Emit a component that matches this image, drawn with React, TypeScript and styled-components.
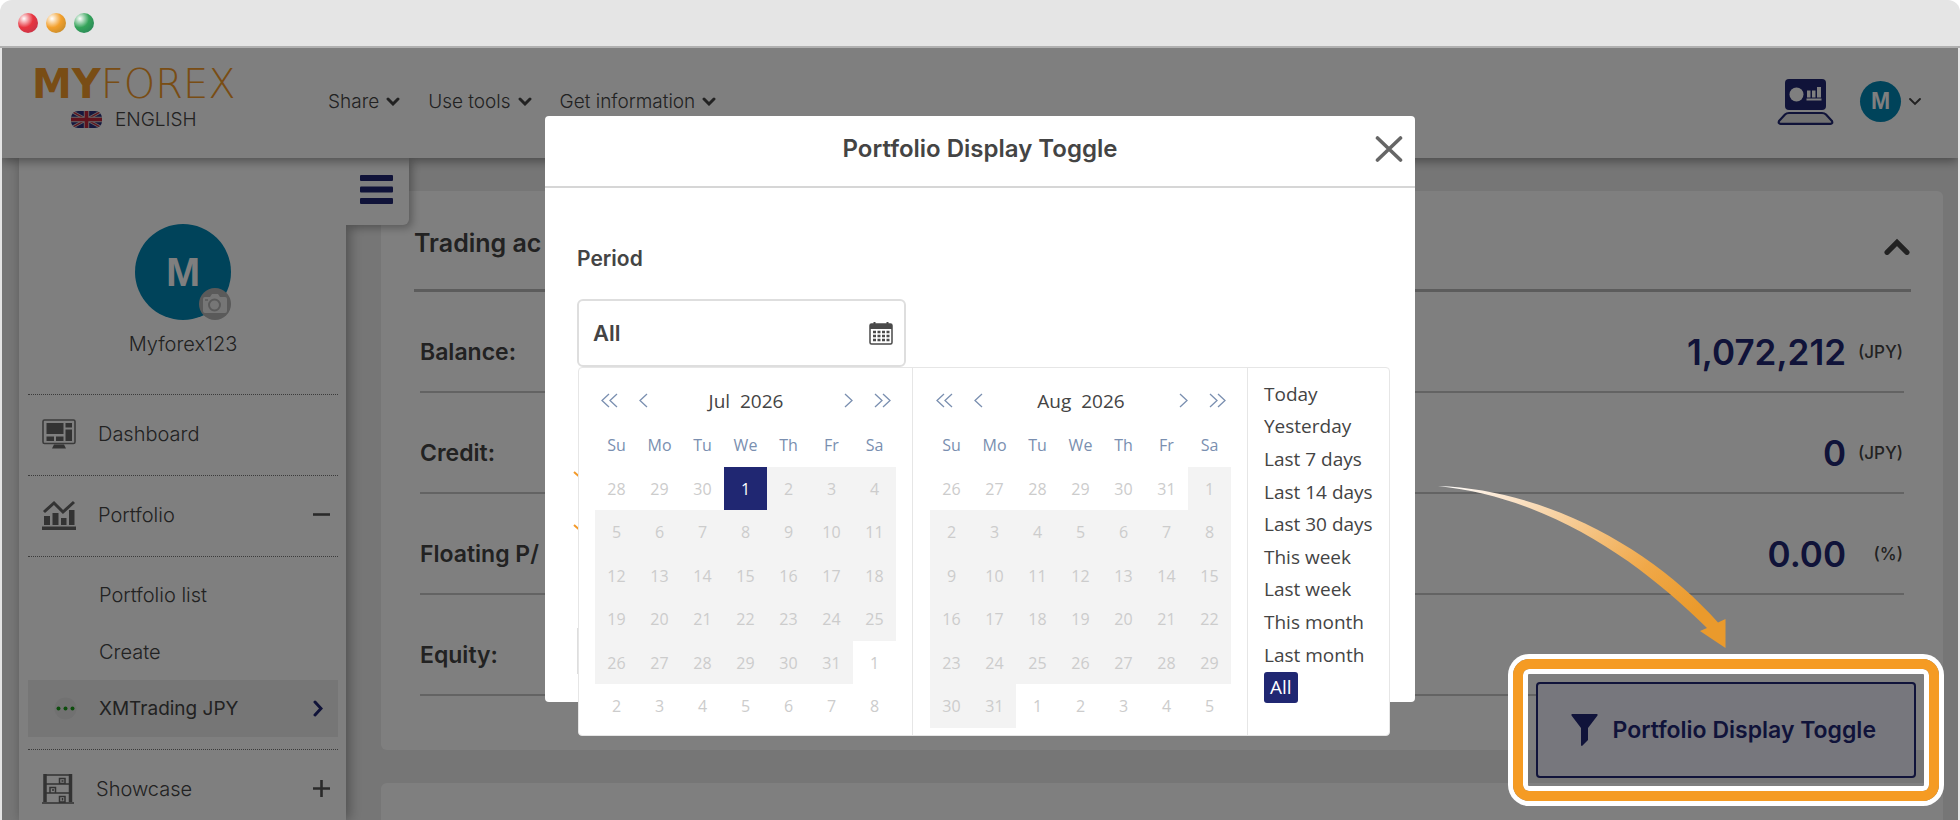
import React from "react";
import styled, { createGlobalStyle } from "styled-components";

const color = {
  navy: "#202772",
  teal: "#0086b4",
  orange: "#f59b23",
  gold: "#f39a2a",
  text: "#444444",
  line: "#c6c6c6",
  page: "#ededed",
  chrome: "#e5e5e5",
  muted: "#7a8fb0",
};

const uiFont = `Inter, "Liberation Sans", sans-serif`;
const calFont = `"Open Sans", "Noto Sans", sans-serif`;

const GlobalStyle = createGlobalStyle`
  *, *::before, *::after { box-sizing: border-box; }
  body { margin: 0; background: #ffffff; font-family: ${uiFont}; color: ${color.text}; }
  button, input { font: inherit; color: inherit; }
  button { background: none; border: 0; padding: 0; cursor: pointer; }
  a { color: inherit; text-decoration: none; }
  ul, dl, dd, h1, h2 { margin: 0; padding: 0; }
  ul { list-style: none; }
  svg { display: block; flex: none; }
`;

/* Window frame */
const Window = styled.div`
  display: flex;
  flex-direction: column;
  height: 100vh;
`;
const TitleBar = styled.div`
  display: flex;
  align-items: center;
  gap: 8px;
  flex: none;
  height: 48px;
  padding: 0 18px;
  background: ${color.chrome};
  border-bottom: 2px solid #b0b0b0;
  border-radius: 12px 12px 0 0;
`;
const Light = styled.span<{ $base: string; $deep: string }>`
  width: 20px;
  height: 20px;
  border-radius: 50%;
  background: radial-gradient(circle at 30% 28%, #ffffff 0, ${(p) => p.$base} 45%, ${(p) => p.$deep} 80%, ${(p) => p.$base} 100%);
`;
const Screen = styled.div`
  position: relative;
  display: flex;
  flex-direction: column;
  flex: 1;
  min-height: 0;
  overflow: hidden;
  background: ${color.page};
  border: solid ${color.chrome};
  border-width: 0 2px;
`;

/* Header */
const Header = styled.header`
  position: relative;
  z-index: 2;
  display: flex;
  align-items: center;
  flex: none;
  height: 110px;
  padding: 0 36px 3px 30px;
  background: #ffffff;
  box-shadow: 0 3px 10px rgba(0, 0, 0, 0.4);
`;
const Brand = styled.div`
  display: flex;
  flex-direction: column;
  width: 296px;
  padding-bottom: 10px;
`;
const Logo = styled.a`
  font: 200 40px/47px "DejaVu Sans", sans-serif;
  color: ${color.gold};
  b { font-weight: 700; }
`;
const Language = styled.button`
  display: flex;
  align-items: center;
  gap: 13px;
  padding: 0 0 0 39px;
  font-size: 19px;
  font-weight: 300;
  line-height: 24px;
`;
const Nav = styled.nav`
  display: flex;
  gap: 28px;
  flex: 1;
`;
const NavButton = styled.button`
  display: flex;
  align-items: center;
  gap: 7px;
  font-size: 19px;
  font-weight: 300;
  line-height: 26px;
`;
const Account = styled.div`
  display: flex;
  align-items: center;
  gap: 26px;
`;
const AccountButton = styled.button`
  display: flex;
  align-items: center;
  gap: 7px;
`;
const Avatar = styled.span<{ $size: number; $font: number }>`
  display: grid;
  place-items: center;
  width: ${(p) => p.$size}px;
  height: ${(p) => p.$size}px;
  border-radius: 50%;
  background: ${color.teal};
  color: #ffffff;
  font: 700 ${(p) => p.$font}px/1 "Liberation Sans", sans-serif;
`;

/* Main area */
const Body = styled.div`
  display: flex;
  gap: 35px;
  flex: 1;
  min-height: 0;
  padding: 0 15px 0 17px;
`;
const Sidebar = styled.aside`
  position: relative;
  z-index: 1;
  flex: none;
  width: 327px;
  padding: 66px 8px 0 9px;
  background: #ffffff;
  box-shadow: 3px 0 12px rgba(0, 0, 0, 0.35);
`;
const MenuTab = styled.button`
  position: absolute;
  top: 0;
  left: 100%;
  display: flex;
  justify-content: center;
  width: 63px;
  height: 67px;
  padding: 17px 2px 0 0;
  background: #ffffff;
  border-radius: 0 0 6px 0;
  box-shadow: 3px 3px 8px rgba(0, 0, 0, 0.3);
  clip-path: inset(0 -20px -20px 0);
`;
const Profile = styled.div`
  display: flex;
  flex-direction: column;
  align-items: center;
  gap: 11px;
  height: 170px;
  font-size: 20px;
  font-weight: 300;
  line-height: 26px;
`;
const Portrait = styled.div`
  position: relative;
`;
const CameraBadge = styled.button`
  position: absolute;
  right: 0;
  bottom: 0;
  display: grid;
  place-items: center;
  width: 32px;
  height: 32px;
  border-radius: 50%;
  background: #b4b4b4;
`;
const MenuRow = styled.button`
  display: flex;
  align-items: center;
  gap: 22px;
  width: 100%;
  height: 81px;
  padding: 0 8px 3px 14px;
  border-top: 1px dotted #777777;
  font-size: 20px;
  font-weight: 300;
  text-align: left;
  span { flex: 1; }
`;
const SubMenu = styled.ul`
  padding: 9px 0 12px;
  border-top: 1px dotted #777777;
`;
const SubLink = styled.a<{ $active?: boolean }>`
  display: flex;
  align-items: center;
  height: 57px;
  padding: 0 15px 0 ${(p) => (p.$active ? 26 : 71)}px;
  gap: 22px;
  background: ${(p) => (p.$active ? color.page : "transparent")};
  font-size: ${(p) => (p.$active ? 19 : 20)}px;
  font-weight: ${(p) => (p.$active ? 400 : 300)};
  span { flex: 1; }
`;

const Content = styled.main`
  display: flex;
  flex-direction: column;
  gap: 33px;
  flex: 1;
  min-width: 0;
  padding-top: 33px;
`;
const Card = styled.section`
  flex: none;
  min-height: 320px;
  padding: 0 32px 54px 33px;
  background: #ffffff;
  border-radius: 6px;
`;
const CardHead = styled.div`
  display: flex;
  align-items: center;
  justify-content: space-between;
  height: 101px;
  padding-top: 6px;
  border-bottom: 3px solid #b9b9b9;
  h2 { font-size: 25px; font-weight: 600; line-height: 32px; }
  button { padding-top: 7px; }
`;
const Figures = styled.dl`
  padding: 0 7px 0 6px;
`;
const Figure = styled.div`
  display: flex;
  align-items: center;
  justify-content: space-between;
  height: 101px;
  padding: 20px 1px 0 0;
  border-bottom: 2px solid ${color.line};
  dt { font-size: 23px; font-weight: 600; }
  dd { display: flex; align-items: center; }
`;
const Amount = styled.span`
  color: ${color.navy};
  font-size: 35px;
  font-weight: 600;
`;
const Unit = styled.span`
  width: 57px;
  font-size: 17px;
  font-weight: 500;
  text-align: right;
`;

/* Modal */
const Overlay = styled.div`
  position: absolute;
  inset: 0;
  z-index: 3;
  display: flex;
  justify-content: center;
  align-items: flex-start;
  padding-top: 68px;
  background: rgba(0, 0, 0, 0.5);
`;
const Modal = styled.div`
  width: 870px;
  max-width: 100%;
  background: #ffffff;
  border-radius: 4px;
`;
const ModalHead = styled.div`
  display: grid;
  grid-template-columns: 40px 1fr 40px;
  align-items: center;
  justify-items: center;
  height: 72px;
  padding: 0 6px 4px;
  border-bottom: 2px solid #d6d6d6;
  h1 { font-size: 24px; font-weight: 600; line-height: 32px; }
`;
const ModalBody = styled.div`
  display: flex;
  flex-direction: column;
  padding: 57px 32px 28px;
`;
const FieldLabel = styled.label`
  margin-bottom: 26px;
  font-size: 21px;
  font-weight: 600;
  line-height: 28px;
`;
const FieldWrap = styled.div`
  position: relative;
`;
const Field = styled.div`
  display: flex;
  align-items: center;
  width: 329px;
  height: 68px;
  padding: 0 11px 0 14px;
  border: 2px solid #dedede;
  border-radius: 6px;
  input {
    flex: 1;
    min-width: 0;
    padding: 0;
    border: 0;
    outline: 0;
    background: none;
    font-size: 22px;
    font-weight: 600;
  }
`;
const Options = styled.div`
  display: flex;
  flex-direction: column;
  gap: 29px;
  margin-left: -4px;
  padding: 104px 0 80px;
`;
const OptionBox = styled.div`
  width: 300px;
  height: 46px;
  border: 1px solid #dedede;
`;

/* Date range popup */
const Picker = styled.div`
  position: absolute;
  top: 100%;
  left: 1px;
  display: flex;
  width: 812px;
  background: #ffffff;
  border: 1px solid #e6e6e6;
  border-radius: 4px;
  font-family: ${calFont};
`;
const Month = styled.div`
  padding: 11px 16px 7px;
  border-right: 1px solid #e6e6e6;
  & + & { padding-left: 17px; }
`;
const MonthHead = styled.div`
  display: flex;
  align-items: center;
  justify-content: space-between;
  height: 43px;
  padding: 0 5px 0 6px;
  font-size: 19px;
  span { white-space: pre; }
`;
const Steps = styled.div`
  display: flex;
  gap: 21px;
`;
const Days = styled.table`
  border-collapse: collapse;
  font-size: 16px;
  th {
    width: 43px;
    height: 45px;
    padding: 0;
    color: ${color.muted};
    font-weight: 400;
  }
  tr:nth-child(even) td { height: 44px; }
`;
const Day = styled.td<{ $kind: "out" | "in" | "picked" }>`
  width: 43px;
  height: 43px;
  padding: 0;
  text-align: center;
  color: ${(p) => (p.$kind === "picked" ? "#ffffff" : "#cccccc")};
  background: ${(p) => (p.$kind === "picked" ? color.navy : p.$kind === "in" ? "#f3f3f3" : "transparent")};
`;
const DayButton = styled.button`
  width: 100%;
  height: 100%;
  line-height: 24px;
`;
const Presets = styled.ul`
  display: grid;
  grid-auto-rows: 1fr;
  height: 326px;
  margin-top: 10px;
  padding-left: 16px;
  li { display: flex; align-items: center; }
`;
const Preset = styled.button<{ $on?: boolean }>`
  padding: ${(p) => (p.$on ? "0 6px" : "0")};
  border-radius: 3px;
  background: ${(p) => (p.$on ? color.navy : "transparent")};
  color: ${(p) => (p.$on ? "#ffffff" : color.text)};
  font-size: 19px;
  line-height: 31px;
`;

/* Callout around the floating button */
const Pointer = styled.svg`
  position: absolute;
  z-index: 4;
  right: 232px;
  bottom: 172px;
`;
const Callout = styled.div`
  position: absolute;
  z-index: 4;
  right: 19px;
  bottom: 19px;
  padding: 13px;
  border: 10px solid ${color.orange};
  border-radius: 16px;
  box-shadow: 0 0 0 5px #ffffff, inset 0 0 0 5px #ffffff;
`;
const ToggleButton = styled.button`
  display: flex;
  align-items: center;
  gap: 15px;
  height: 96px;
  padding: 0 38px 0 33px;
  background: #77777d;
  border: 2px solid #10133a;
  border-radius: 4px;
  color: #10133a;
  font-size: 23px;
  font-weight: 600;
`;

/* Icons */
const Chevron = ({ w = 14, stroke = 3, up = false }: { w?: number; stroke?: number; up?: boolean }) => (
  <svg width={w} height={w * 0.64} viewBox="0 0 14 9" fill="none" stroke={color.text} strokeWidth={stroke} strokeLinecap="round">
    <path d={up ? "M2 7.2 7 2.2 12 7.2" : "M2 2 7 7 12 2"} />
  </svg>
);
const Step = ({ dir, double }: { dir: "prev" | "next"; double?: boolean }) => (
  <svg width={double ? 17 : 9} height={15} viewBox={double ? "0 0 17 15" : "0 0 9 15"} fill="none" stroke={color.muted} strokeWidth="1.3">
    <path d={dir === "prev" ? "M8 1 1 7.5 8 14" : "M1 1 8 7.5 1 14"} />
    {double && <path d={dir === "prev" ? "M16 1 9 7.5 16 14" : "M9 1 16 7.5 9 14"} />}
  </svg>
);
const Flag = () => (
  <svg width="31" height="18" viewBox="0 0 31 18">
    <clipPath id="flag"><rect width="31" height="17" rx="7" /></clipPath>
    <g clipPath="url(#flag)">
      <rect width="31" height="17" fill="#2a2f7c" />
      <path d="M0 0 31 17M31 0 0 17" stroke="#d0d0d0" strokeWidth="3" />
      <path d="M0 0 31 17M31 0 0 17" stroke="#c0263a" strokeWidth="1.4" />
      <path d="M15.500 0V17M0 8.500H31" stroke="#d0d0d0" strokeWidth="5.400" />
      <path d="M15.500 0V17M0 8.500H31" stroke="#c0263a" strokeWidth="3.600" />
    </g>
  </svg>
);
const Laptop = () => (
  <svg width="57" height="46" viewBox="0 0 57 46">
    <rect x="8" width="41" height="31" rx="4" fill={color.navy} />
    <circle cx="19.500" cy="15.500" r="7" fill="#fff" />
    <path d="M30 11.500h3.500v7h1.500v-7h3.500v7h1.500V8h4v10.500H30zM29.500 19.500h15v2h-15z" fill="#fff" />
    <path d="M12 34h33q2.500 0 4 1.500l6 6.500q1 2.800-1.500 2.800h-50q-2.500 0-1.500-2.800l6-6.500Q9.500 34 12 34z" fill="#e4e4e4" stroke={color.navy} strokeWidth="2.200" />
  </svg>
);
const Burger = () => (
  <svg width="33" height="29" viewBox="0 0 33 29" fill={color.navy}>
    <rect width="33" height="6" rx="1" /><rect y="11.500" width="33" height="6" rx="1" /><rect y="23" width="33" height="6" rx="1" />
  </svg>
);
const Camera = () => (
  <svg width="24" height="20" viewBox="0 0 24 20">
    <path d="M2 3h5l2-3h6l2 3h5q2 0 2 2v12q0 2-2 2H2q-2 0-2-2V5q0-2 2-2z" fill="#ececec" />
    <circle cx="11.500" cy="11" r="5.500" fill="none" stroke="#b4b4b4" strokeWidth="2" />
    <path d="M2 6h3" stroke="#b4b4b4" strokeWidth="1.500" />
  </svg>
);
const Monitor = () => (
  <svg width="34" height="30" viewBox="0 0 34 30" fill="#666">
    <rect x="1" y="1" width="32" height="23.500" rx="1.500" fill="none" stroke="#777" strokeWidth="1.600" />
    <path d="M4.500 4h17v11h-17zM23.500 4H30v4.500h-6.500zM23.500 10.500H30V22h-6.500zM4.500 17.500H12V22H4.500zM14 17.500h7.500V22H14zM12 25.500h10l2 4H10z" />
  </svg>
);
const ChartIcon = () => (
  <svg width="34" height="30" viewBox="0 0 34 30" fill="#666">
    <path d="M2 12 12 3l9 9L32 2" fill="none" stroke="#666" strokeWidth="3" />
    <path d="M2 16h6v9H2zM10.500 13h6v12h-6zM19 18h5.500v7H19zM27 10h5.500v15H27zM0 26.500h34v3.500H0z" />
  </svg>
);
const Shelf = () => (
  <svg width="32" height="30" viewBox="0 0 32 30" fill="none" stroke="#666" strokeWidth="1.500">
    <path d="M3 0v28M28.500 0v28" strokeWidth="3.500" />
    <path d="M0 29h32M3 1h25M3 10h25M3 19h25M17.500 4.500h5.500v5h-5.500zM8 13.500h5.500V19H8zM17.500 22.500h5.500V28h-5.500zM19.500 7h2M10 16h2M20.500 24v2.500" />
  </svg>
);
const Sign = ({ plus }: { plus?: boolean }) => (
  <svg width="17" height="17" viewBox="0 0 17 17" stroke="#555" strokeWidth="2.600"><path d={plus ? "M0 8.500h17M8.500 0v17" : "M0 8.500h17"} /></svg>
);
const Broker = () => (
  <svg width="23" height="23" viewBox="0 0 23 23">
    <circle cx="11.500" cy="11.500" r="11" fill="#e2e2e2" />
    <g fill="#1a9a1a"><circle cx="4.500" cy="11.500" r="2" /><circle cx="11.500" cy="11.500" r="2" /><circle cx="18.500" cy="11.500" r="2" /></g>
  </svg>
);
const CalendarIcon = () => (
  <svg width="24" height="24" viewBox="0 0 24 24">
    <path d="M5.500 1v4M18.500 1v4" stroke="#4a4a4a" strokeWidth="2" />
    <rect x="1" y="3" width="22" height="20" rx="1.500" fill="#fff" stroke="#4a4a4a" strokeWidth="1.500" />
    <path d="M1 3h22v5H1z" fill="#4a4a4a" />
    <path d="M4 11h17M4 15h17M4 19h17" stroke="#4a4a4a" strokeWidth="2.400" strokeDasharray="3 1.500" />
  </svg>
);
const Check = () => (
  <svg width="24" height="24" viewBox="0 0 24 24" fill="none" stroke={color.gold} strokeWidth="2"><path d="M1 1 9 8 22 0" /></svg>
);
const Funnel = () => (
  <svg width="27" height="32" viewBox="0 0 27 32" fill="#10133a">
    <path d="M1 0h25q1 0 .5 1.500L17 14v12l-6 6q-1 0-1-1V14L.5 1.500Q0 0 1 0z" />
  </svg>
);

type MonthData = { name: string; lead: number[]; count: number; trail: number; picked?: number };
const months: MonthData[] = [
  { name: "Jul  2026", lead: [28, 29, 30], count: 31, trail: 8, picked: 1 },
  { name: "Aug  2026", lead: [26, 27, 28, 29, 30, 31], count: 31, trail: 5 },
];
const weekdays = ["Su", "Mo", "Tu", "We", "Th", "Fr", "Sa"];
const presets = ["Today", "Yesterday", "Last 7 days", "Last 14 days", "Last 30 days", "This week", "Last week", "This month", "Last month", "All"];
const figures = [
  { label: "Balance:", value: "1,072,212", unit: "(JPY)" },
  { label: "Credit:", value: "0", unit: "(JPY)" },
  { label: "Floating P/", value: "0.00", unit: "(%)" },
  { label: "Equity:" },
];

function MonthPanel({ data }: { data: MonthData }) {
  const range = (n: number) => Array.from({ length: n }, (_, i) => i + 1);
  const cells = [
    ...data.lead.map((d) => ({ d, kind: "out" as const })),
    ...range(data.count).map((d) => ({ d, kind: d === data.picked ? ("picked" as const) : ("in" as const) })),
    ...range(data.trail).map((d) => ({ d, kind: "out" as const })),
  ];
  return (
    <Month>
      <MonthHead>
        <Steps>
          <button aria-label="Previous year"><Step dir="prev" double /></button>
          <button aria-label="Previous month"><Step dir="prev" /></button>
        </Steps>
        <span>{data.name}</span>
        <Steps>
          <button aria-label="Next month"><Step dir="next" /></button>
          <button aria-label="Next year"><Step dir="next" double /></button>
        </Steps>
      </MonthHead>
      <Days>
        <thead><tr>{weekdays.map((w) => <th key={w} scope="col">{w}</th>)}</tr></thead>
        <tbody>
          {range(6).map((r) => (
            <tr key={r}>
              {cells.slice((r - 1) * 7, r * 7).map((c, i) => (
                <Day key={i} $kind={c.kind}><DayButton>{c.d}</DayButton></Day>
              ))}
            </tr>
          ))}
        </tbody>
      </Days>
    </Month>
  );
}

export default function App() {
  return (
    <>
      <GlobalStyle />
      <Window>
        <TitleBar>
          <Light $base="#e8343f" $deep="#c93548" />
          <Light $base="#f3a02c" $deep="#c98d2c" />
          <Light $base="#35a45a" $deep="#2b8a58" />
        </TitleBar>
        <Screen>
          <Header>
            <Brand>
              <Logo href="#"><b>MY</b>FOREX</Logo>
              <Language><Flag />ENGLISH</Language>
            </Brand>
            <Nav>
              {["Share", "Use tools", "Get information"].map((t) => (
                <NavButton key={t}>{t}<Chevron /></NavButton>
              ))}
            </Nav>
            <Account>
              <button aria-label="Demo board"><Laptop /></button>
              <AccountButton><Avatar $size={41} $font={23}>M</Avatar><Chevron stroke={2} /></AccountButton>
            </Account>
          </Header>

          <Body>
            <Sidebar>
              <MenuTab aria-label="Menu"><Burger /></MenuTab>
              <Profile>
                <Portrait>
                  <Avatar $size={96} $font={41}>M</Avatar>
                  <CameraBadge aria-label="Change photo"><Camera /></CameraBadge>
                </Portrait>
                Myforex123
              </Profile>
              <MenuRow><Monitor /><span>Dashboard</span></MenuRow>
              <MenuRow><ChartIcon /><span>Portfolio</span><Sign /></MenuRow>
              <SubMenu>
                <li><SubLink href="#">Portfolio list</SubLink></li>
                <li><SubLink href="#">Create</SubLink></li>
                <li>
                  <SubLink href="#" $active>
                    <Broker /><span>XMTrading JPY</span>
                    <svg width="10" height="17" viewBox="0 0 10 17" fill="none" stroke={color.navy} strokeWidth="3" strokeLinecap="round"><path d="M2 2 8 8.500 2 15" /></svg>
                  </SubLink>
                </li>
              </SubMenu>
              <MenuRow><Shelf /><span>Showcase</span><Sign plus /></MenuRow>
            </Sidebar>

            <Content>
              <Card>
                <CardHead>
                  <h2>Trading ac</h2>
                  <button aria-label="Collapse"><Chevron w={28} stroke={2.6} up /></button>
                </CardHead>
                <Figures>
                  {figures.map((f) => (
                    <Figure key={f.label}>
                      <dt>{f.label}</dt>
                      {f.value && <dd><Amount>{f.value}</Amount><Unit>{f.unit}</Unit></dd>}
                    </Figure>
                  ))}
                </Figures>
              </Card>
              <Card />
            </Content>
          </Body>

          <Overlay>
            <Modal role="dialog" aria-labelledby="modal-title">
              <ModalHead>
                <span />
                <h1 id="modal-title">Portfolio Display Toggle</h1>
                <button aria-label="Close">
                  <svg width="28" height="26" viewBox="0 0 28 26" stroke="#666" strokeWidth="3.600" strokeLinecap="round"><path d="M2.500 2 25.500 24M25.500 2 2.500 24" /></svg>
                </button>
              </ModalHead>
              <ModalBody>
                <FieldLabel htmlFor="period">Period</FieldLabel>
                <FieldWrap>
                  <Field><input id="period" defaultValue="All" /><CalendarIcon /></Field>
                  <Picker>
                    {months.map((m) => <MonthPanel key={m.name} data={m} />)}
                    <Presets>
                      {presets.map((p) => <li key={p}><Preset $on={p === "All"}>{p}</Preset></li>)}
                    </Presets>
                  </Picker>
                </FieldWrap>
                <Options><Check /><Check /></Options>
                <OptionBox />
              </ModalBody>
            </Modal>
          </Overlay>

          <Pointer width="288" height="162" viewBox="1440 486 288 162">
            <defs>
              <linearGradient id="sweep" x1="0" y1="0" x2="1" y2="0.6">
                <stop offset="0" stopColor="#ffffff" />
                <stop offset="0.2" stopColor="#fbe6cf" />
                <stop offset="0.75" stopColor="#f0a848" />
                <stop offset="1" stopColor="#ea9a2c" />
              </linearGradient>
            </defs>
            <path fill="url(#sweep)" d="M1440 486C1550 490 1656 550 1720 622.500L1727.500 619V648L1702 631 1709 628C1645 565 1555 498 1440 486z" />
          </Pointer>
          <Callout>
            <ToggleButton><Funnel />Portfolio Display Toggle</ToggleButton>
          </Callout>
        </Screen>
      </Window>
    </>
  );
}
